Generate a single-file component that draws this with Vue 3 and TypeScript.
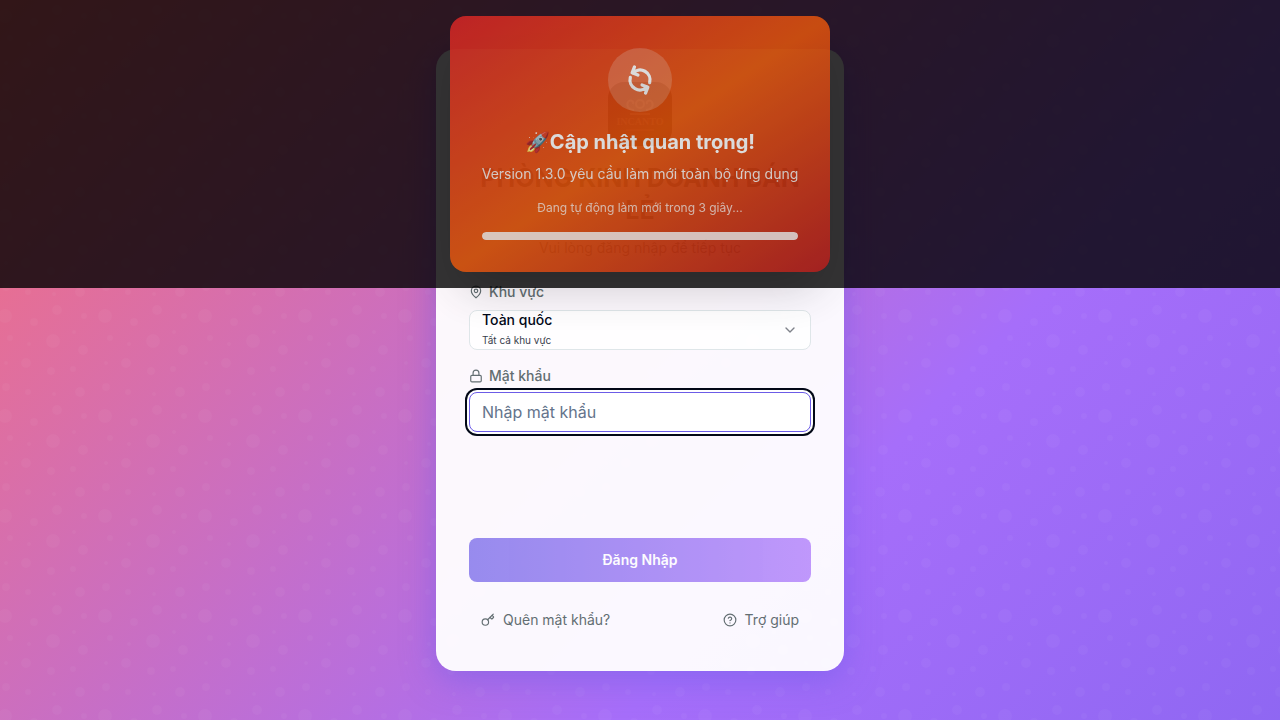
<script setup lang="ts">
import { ref } from 'vue'

interface Dot {
  x: number
  y: number
  r: number
}

const dots: Dot[] = [
  { x: 11, y: 11, r: 7 },
  { x: 59, y: 36, r: 7 },
  { x: 16, y: 33, r: 3 },
  { x: 79, y: 64, r: 3 },
  { x: 34, y: 87, r: 3 },
  { x: 90, y: 11, r: 3 },
  { x: 12, y: 82, r: 4 },
  { x: 40, y: 17, r: 4 },
  { x: 63, y: 5, r: 5 },
  { x: 57, y: 66, r: 4 },
  { x: 86, y: 87, r: 5 },
  { x: 32, y: 58, r: 5 },
  { x: 89, y: 45, r: 5 },
  { x: 80, y: 27, r: 2 },
  { x: 60, y: 89, r: 2 },
  { x: 35, y: 39, r: 2 },
  { x: 12, y: 58, r: 2 },
]

const region = ref<string>('all')
const password = ref<string>('')
const version = '1.3.0'
const secondsLeft = ref<number>(3)
const progress = ref<number>(100)
</script>

<template>
  <div class="page">
    <svg class="pattern" aria-hidden="true">
      <defs>
        <pattern id="bubbles" x="-6" y="5" width="100" height="100" patternUnits="userSpaceOnUse">
          <circle v-for="(d, i) in dots" :key="i" :cx="d.x" :cy="d.y" :r="d.r" fill="#fff" />
        </pattern>
      </defs>
      <rect width="100%" height="100%" fill="url(#bubbles)" />
    </svg>

    <main class="card">
      <header class="head">
        <svg class="logo" viewBox="0 0 64 64" role="img" aria-label="Incanto">
          <rect width="64" height="64" rx="16" fill="#101010" />
          <g fill="none" stroke="#8a7a60" stroke-width="2">
            <circle cx="32" cy="22" r="4" />
            <path d="M26 28c-5 0-8-4-6-8 2-3 6-1 5 2M38 28c5 0 8-4 6-8-2-3-6-1-5 2M22 32h20" />
          </g>
          <text x="32" y="43" text-anchor="middle" class="logo-text">INCANTO</text>
          <path d="M18 48h28" stroke="#8a7a60" />
        </svg>
        <h1>PHÒNG KINH DOANH BÁN LẺ</h1>
        <p>Vui lòng đăng nhập để tiếp tục</p>
      </header>

      <form @submit.prevent>
        <div class="field region">
          <label for="region">
            <svg class="icon" viewBox="0 0 24 24">
              <path d="M20 10c0 6-8 12-8 12s-8-6-8-12a8 8 0 0 1 16 0Z" />
              <circle cx="12" cy="10" r="3" />
            </svg>
            Khu vực
          </label>
          <div class="select">
            <select id="region" v-model="region">
              <option value="all">Toàn quốc</option>
            </select>
            <span class="hint">Tất cả khu vực</span>
            <svg class="chevron" viewBox="0 0 24 24"><path d="m6 9 6 6 6-6" /></svg>
          </div>
        </div>

        <div class="field secret">
          <label for="password">
            <svg class="icon" viewBox="0 0 24 24">
              <rect x="3" y="11" width="18" height="11" rx="2" />
              <path d="M7 11V7a5 5 0 0 1 10 0v4" />
            </svg>
            Mật khẩu
          </label>
          <input id="password" v-model="password" type="password" placeholder="Nhập mật khẩu" />
        </div>

        <button class="submit" type="submit">Đăng Nhập</button>
      </form>

      <footer class="links">
        <button type="button">
          <svg class="icon" viewBox="0 0 24 24">
            <path d="m15.5 7.5 2.3 2.3a1 1 0 0 0 1.4 0l2.1-2.1a1 1 0 0 0 0-1.4L19 4" />
            <path d="m21 2-9.6 9.6" />
            <circle cx="7.5" cy="15.5" r="5.5" />
          </svg>
          Quên mật khẩu?
        </button>
        <button type="button">
          <svg class="icon" viewBox="0 0 24 24">
            <circle cx="12" cy="12" r="10" />
            <path d="M9.09 9a3 3 0 0 1 5.83 1c0 2-3 3-3 3M12 17h.01" />
          </svg>
          Trợ giúp
        </button>
      </footer>
    </main>

    <div class="overlay" role="alertdialog" aria-labelledby="update-title">
      <section class="update">
        <div class="badge">
          <svg viewBox="0 0 24 24">
            <path
              d="M4 4v5h.582m15.356 2A8.001 8.001 0 004.582 9m0 0H9m11 11v-5h-.581m0 0a8.003 8.003 0 01-15.357-2m15.357 2H15"
            />
          </svg>
        </div>
        <h2 id="update-title">🚀Cập nhật quan trọng!</h2>
        <p class="lead">Version {{ version }} yêu cầu làm mới toàn bộ ứng dụng</p>
        <p class="note">Đang tự động làm mới trong {{ secondsLeft }} giây...</p>
        <div class="track"><div class="fill" :style="{ width: progress + '%' }"></div></div>
      </section>
    </div>
  </div>
</template>

<style>
body {
  margin: 0;
}
</style>

<style scoped>
* {
  box-sizing: border-box;
}

.page {
  position: relative;
  display: flex;
  align-items: center;
  justify-content: center;
  min-height: 100vh;
  padding: 20px;
  font-family: Inter, 'Noto Sans', sans-serif;
  background: linear-gradient(135deg, #f86f78 0%, #a66efa 67%, #6c5ce7 150%);
}

h1,
h2,
p {
  margin: 0;
}

button,
input,
select {
  font-family: inherit;
}

.pattern {
  position: absolute;
  inset: 0;
  width: 100%;
  height: 100%;
  opacity: 0.03;
}

.card {
  position: relative;
  width: 100%;
  max-width: 408px;
  padding: 32px;
  border: 1px solid rgba(255, 255, 255, 0.2);
  border-radius: 20px;
  background: rgba(255, 255, 255, 0.95);
  box-shadow: 0 8px 32px rgba(108, 92, 231, 0.5);
}

.head {
  display: flex;
  flex-direction: column;
  align-items: center;
  text-align: center;
}

.logo {
  width: 64px;
  height: 64px;
  margin-bottom: 16px;
}

.logo-text {
  font: 700 10px 'Liberation Serif', serif;
  fill: #8a7a60;
}

.head h1 {
  font-size: 25px;
  line-height: 32px;
  font-weight: 700;
  color: #14181a;
}

.head p {
  margin-top: 12px;
  font-size: 14px;
  line-height: 20px;
  color: #2d3436;
}

.field {
  display: flex;
  flex-direction: column;
}

.region {
  gap: 8px;
  margin-top: 24px;
}

.secret {
  gap: 6px;
  margin-top: 16px;
}

.field label {
  display: flex;
  align-items: center;
  gap: 6px;
  font-size: 14px;
  line-height: 20px;
  font-weight: 500;
  color: #636e72;
}

.icon {
  flex: none;
  width: 14px;
  height: 14px;
}

.icon,
.chevron {
  fill: none;
  stroke: currentColor;
  stroke-width: 2;
  stroke-linecap: round;
  stroke-linejoin: round;
}

.select {
  display: grid;
  color: #020817;
}

.select > * {
  grid-area: 1 / 1;
}

.select select {
  width: 100%;
  height: 40px;
  padding: 0 36px 20px 12px;
  border: 1px solid #dfe6e9;
  border-radius: 8px;
  appearance: none;
  background: rgba(255, 255, 255, 0.8);
  font-size: 14px;
  line-height: 18px;
  font-weight: 500;
  color: inherit;
}

.hint {
  align-self: end;
  padding: 0 13px 2px;
  font-size: 10px;
  line-height: 16px;
  opacity: 0.8;
  pointer-events: none;
}

.chevron {
  align-self: center;
  justify-self: end;
  width: 16px;
  height: 16px;
  margin-right: 13px;
  opacity: 0.5;
  pointer-events: none;
}

.secret input {
  width: 100%;
  height: 40px;
  padding: 0 12px;
  border: 1px solid #6c5ce7;
  border-radius: 8px;
  outline: none;
  background: #fff;
  box-shadow: 0 0 0 2px #fff, 0 0 0 4px #020817;
  font-size: 16px;
  color: #020817;
}

.secret input::placeholder {
  color: #64748b;
}

.submit {
  display: block;
  width: 100%;
  height: 44px;
  margin-top: 106px;
  border: 0;
  border-radius: 8px;
  background: linear-gradient(90deg, #6c5ce7, #a66efa);
  font-size: 14px;
  line-height: 20px;
  font-weight: 600;
  color: #fff;
  opacity: 0.7;
}

.links {
  display: flex;
  justify-content: space-between;
  margin-top: 20px;
}

.links button {
  display: flex;
  align-items: center;
  gap: 8px;
  height: 36px;
  padding: 0 12px;
  border: 0;
  background: none;
  font-size: 14px;
  line-height: 20px;
  color: #636e72;
}

.overlay {
  position: fixed;
  top: 0;
  left: 0;
  right: 0;
  display: flex;
  justify-content: center;
  padding: 16px;
  background: rgba(0, 0, 0, 0.8);
}

.update {
  display: flex;
  flex-direction: column;
  align-items: center;
  padding: 32px;
  border-radius: 16px;
  background: linear-gradient(to bottom right, #dc2626, #ea580c, #b91c1c);
  box-shadow: 0 25px 50px -12px rgba(0, 0, 0, 0.25);
  text-align: center;
  color: #fff;
  opacity: 0.82;
}

.badge {
  display: grid;
  place-items: center;
  width: 64px;
  height: 64px;
  margin-bottom: 16px;
  border-radius: 50%;
  background: rgba(255, 255, 255, 0.2);
}

.badge svg {
  width: 30px;
  height: 30px;
  fill: none;
  stroke: currentColor;
  stroke-width: 2.6;
  stroke-linecap: round;
  stroke-linejoin: round;
  transform: rotate(22deg);
}

.update h2 {
  font-size: 20px;
  line-height: 28px;
  font-weight: 700;
}

.lead {
  margin-top: 8px;
  font-size: 14px;
  line-height: 20px;
  opacity: 0.9;
}

.note {
  margin-top: 16px;
  font-size: 12px;
  line-height: 16px;
  opacity: 0.75;
}

.track {
  width: 100%;
  height: 8px;
  margin-top: 16px;
  overflow: hidden;
  border-radius: 4px;
  background: rgba(255, 255, 255, 0.2);
}

.fill {
  height: 100%;
  border-radius: 4px;
  background: rgba(255, 255, 255, 0.8);
}
</style>
